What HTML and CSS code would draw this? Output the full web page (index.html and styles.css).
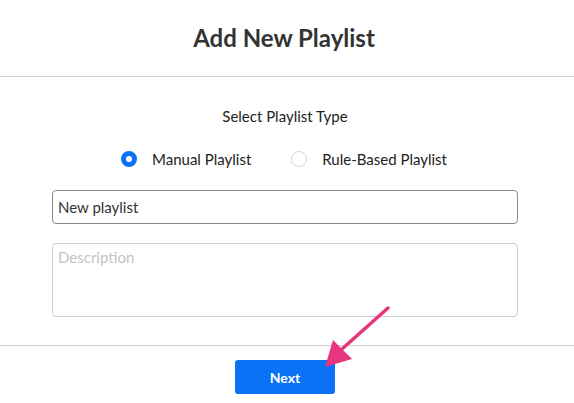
FILE: index.html
```html
<!DOCTYPE html>
<html>
<head>
<meta charset="utf-8">
<link rel="stylesheet" href="styles.css">
</head>
<body>
<div class="modal">
  <div class="header"><h1 class="title">Add New Playlist</h1></div>
  <div class="content">
    <div class="type-label">Select Playlist Type</div>
    <div class="radios">
      <label class="radio-item"><span class="radio checked"></span><span>Manual Playlist</span></label>
      <label class="radio-item"><span class="radio"></span><span>Rule-Based Playlist</span></label>
    </div>
    <div class="field input">New playlist</div>
    <div class="field textarea placeholder">Description</div>
  </div>
  <div class="footer"><button class="btn">Next</button></div>
  <svg class="arrow" width="80" height="80" viewBox="0 0 80 80">
    <line x1="68" y1="8" x2="22" y2="49" stroke="#e8357d" stroke-width="3.5" stroke-linecap="round"/>
    <polygon points="5,67 13,40 32,59" fill="#e8357d"/>
  </svg>
</div>
</body>
</html>
```
FILE: styles.css
```css
html, body { margin: 0; padding: 0; background: #fff; }
body { font-family: Lato, "Open Sans", sans-serif; color: #333; }
.modal { position: relative; width: 574px; height: 403px; overflow: hidden; }
.header { height: 76px; border-bottom: 1px solid #cfcfcf; display: flex; align-items: center; justify-content: center; }
.title { margin: 0 6px 0 0; font-size: 24px; font-weight: 700; color: #333; line-height: 30px; }
.content { display: flex; flex-direction: column; padding: 29px 0 28px 52px; width: 466px; }
.type-label { line-height: 20px; font-size: 15px; text-align: center; color: #222; }
.radios { margin-top: 23px; display: flex; justify-content: center; gap: 40px; line-height: 20px; font-size: 15px; color: #222; padding-right: 2px; }
.radio-item { display: flex; align-items: center; gap: 15px; }
.radio { box-sizing: border-box; width: 16px; height: 16px; border-radius: 50%; border: 1px solid #d8d8d8; background: #fff; }
.radio.checked { border: 5px solid #0a72f5; background: #fff; }
.field { box-sizing: border-box; width: 466px; border-radius: 4px; font-size: 15px; padding: 0 0 0 5px; }
.input { margin-top: 21px; height: 34px; border: 1px solid #8a8a8a; line-height: 32px; color: #333; }
.textarea { margin-top: 19px; height: 74px; border: 1px solid #cfcfcf; line-height: 26px; color: #c4c4c4; }
.footer { border-top: 1px solid #cfcfcf; display: flex; justify-content: center; padding-top: 14px; }
.btn { width: 100px; height: 34px; margin-left: -4px; border: 0; border-radius: 3px; background: #0a72f5; color: #fff; font-family: Lato, sans-serif; font-weight: 700; font-size: 14px; }
.arrow { position: absolute; left: 320px; top: 300px; }
```
